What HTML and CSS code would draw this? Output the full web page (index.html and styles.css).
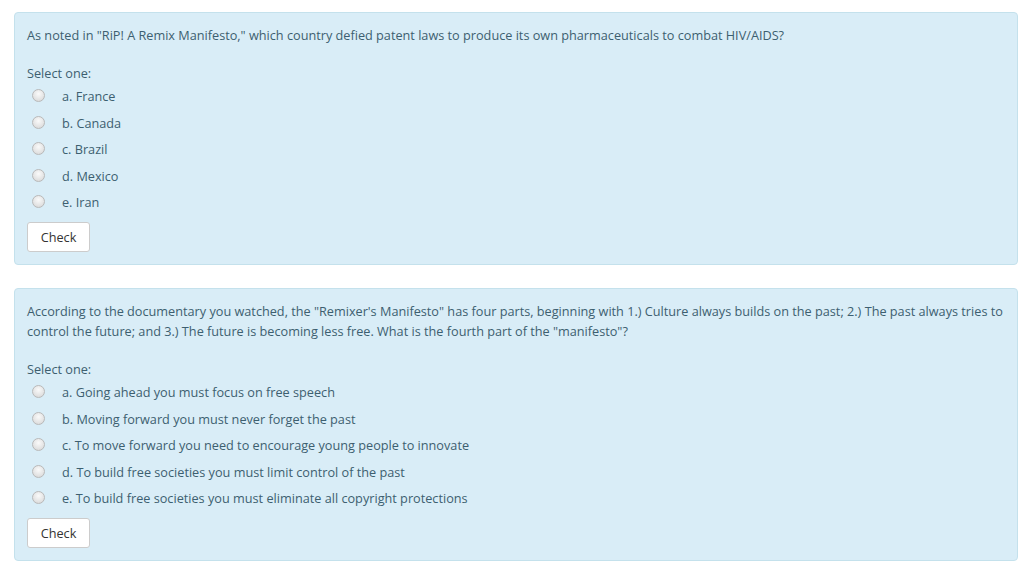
FILE: index.html
```html
<!DOCTYPE html>
<html>
<head>
<meta charset="utf-8">
<link rel="stylesheet" href="styles.css">
</head>
<body>
<div class="page">
  <div class="que">
    <div class="qtext">As noted in "RiP! A Remix Manifesto," which country defied patent laws to produce its own pharmaceuticals to combat HIV/AIDS?</div>
    <div class="prompt">Select one:</div>
    <div class="answers">
      <div class="opt"><span class="radio"></span><span class="label">a. France</span></div>
      <div class="opt"><span class="radio"></span><span class="label">b. Canada</span></div>
      <div class="opt"><span class="radio"></span><span class="label">c. Brazil</span></div>
      <div class="opt"><span class="radio"></span><span class="label">d. Mexico</span></div>
      <div class="opt"><span class="radio"></span><span class="label">e. Iran</span></div>
    </div>
    <button class="check">Check</button>
  </div>
  <div class="que">
    <div class="qtext">According to the documentary you watched, the "Remixer's Manifesto" has four parts, beginning with 1.) Culture always builds on the past; 2.) The past always tries to control the future; and 3.) The future is becoming less free. What is the fourth part of the "manifesto"?</div>
    <div class="prompt">Select one:</div>
    <div class="answers">
      <div class="opt"><span class="radio"></span><span class="label">a. Going ahead you must focus on free speech</span></div>
      <div class="opt"><span class="radio"></span><span class="label">b. Moving forward you must never forget the past</span></div>
      <div class="opt"><span class="radio"></span><span class="label">c. To move forward you need to encourage young people to innovate</span></div>
      <div class="opt"><span class="radio"></span><span class="label">d. To build free societies you must limit control of the past</span></div>
      <div class="opt"><span class="radio"></span><span class="label">e. To build free societies you must eliminate all copyright protections</span></div>
    </div>
    <button class="check">Check</button>
  </div>
</div>
</body>
</html>
```
FILE: styles.css
```css
html, body {
  margin: 0;
  padding: 0;
  background: #ffffff;
}
body {
  font-family: "Open Sans", "Liberation Sans", sans-serif;
  font-size: 12.7px;
  line-height: 20px;
  color: #3d5f70;
}
.page {
  padding: 12px 6px 0 14px;
  display: flex;
  flex-direction: column;
  gap: 23px;
}
.que {
  background: #d9edf7;
  border: 1px solid #c4e1ec;
  border-radius: 4px;
  padding: 12px 12px 12px 12px;
  display: flex;
  flex-direction: column;
  align-items: flex-start;
}
.qtext {
  margin-bottom: 18px;
}
.prompt {
  height: 20px;
}
.answers {
  display: flex;
  flex-direction: column;
}
.opt {
  height: 26.5px;
  display: flex;
  align-items: center;
}
.radio {
  width: 11px;
  height: 11px;
  border-radius: 50%;
  border: 1px solid #b9b9b9;
  background: radial-gradient(circle at 50% 35%, #fafafa 0%, #e6e6e6 55%, #d4d4d4 100%);
  margin-left: 5px;
  margin-top: -1px;
  box-sizing: content-box;
}
.label {
  margin-left: 17px;
}
.check {
  margin-top: 6.5px;
  font-family: "Open Sans", "Liberation Sans", sans-serif;
  font-size: 12.7px;
  line-height: 18px;
  color: #333333;
  background: #ffffff;
  border: 1px solid #cccccc;
  border-radius: 3px;
  padding: 5px 12px;
  width: 63px;
  height: 30px;
  text-align: center;
}
```
